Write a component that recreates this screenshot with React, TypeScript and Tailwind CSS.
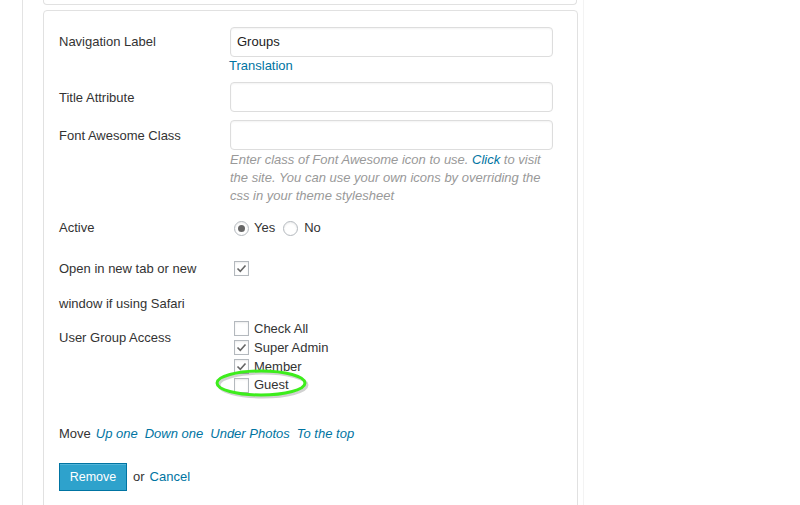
import React from "react";

const font = { fontFamily: '"Liberation Sans", Arial, sans-serif' };

const Check = ({ checked = false }: { checked?: boolean }) => (
  <span className="w-[15px] h-[15px] border border-[#b4b9be] bg-white shadow-[inset_0_1px_2px_rgba(0,0,0,0.08)] flex items-center justify-center shrink-0">
    {checked && (
      <svg width="11" height="11" viewBox="0 0 11 11">
        <path d="M1.5 5.5 L4.3 8.3 L9.5 2.5" fill="none" stroke="#666" strokeWidth="1.6" />
      </svg>
    )}
  </span>
);

const Radio = ({ checked = false }: { checked?: boolean }) => (
  <span className="w-[15px] h-[15px] rounded-full border border-[#b4b9be] bg-white shadow-[inset_0_1px_2px_rgba(0,0,0,0.08)] flex items-center justify-center shrink-0">
    {checked && <span className="w-[7px] h-[7px] rounded-full bg-[#666]" />}
  </span>
);

const Field = () => (
  <div className="h-[30px] w-[323px] border border-[#ddd] rounded-[4px] bg-white shadow-[inset_0_1px_2px_rgba(0,0,0,0.05)]" />
);

export default function App() {
  const groups = [
    { name: "Check All", checked: false, h: "h-[19px]" },
    { name: "Super Admin", checked: true, h: "h-[19px]" },
    { name: "Member", checked: true, h: "h-[19px]" },
    { name: "Guest", checked: false, h: "h-[18px]" },
  ];

  return (
    <div className="relative w-[800px] h-[505px] bg-white overflow-hidden text-[13px] text-[#333]" style={font}>
      <div className="ml-[22px] w-[562px] h-full border-l border-[#e3e3e3] border-r border-r-[#f3f3f3] pl-[20px]">
        <div className="w-[534px] h-[5px] border border-t-0 border-[#e1e1e1] rounded-b-[4px]" />

        <div className="mt-[5px] w-[535px] h-[520px] border border-[#e1e1e1] rounded-[4px] pt-[16px] pl-[15px]">
          <div className="flex">
            <div className="w-[171px] leading-[30px]">Navigation Label</div>
            <div>
              <div className="h-[30px] w-[323px] border border-[#ddd] rounded-[4px] bg-white pl-[6px] leading-[28px] text-[#222] shadow-[inset_0_1px_2px_rgba(0,0,0,0.05)]">
                Groups
              </div>
              <a className="block leading-[18px] -ml-px text-[#0074a2]">Translation</a>
            </div>
          </div>

          <div className="flex mt-[7px]">
            <div className="w-[171px] leading-[30px] pt-px">Title Attribute</div>
            <Field />
          </div>

          <div className="flex mt-[7px]">
            <div className="w-[171px] leading-[30px] pt-px">Font Awesome Class</div>
            <div className="w-[323px]">
              <Field />
              <p className="mt-px leading-[18px] italic text-[#999]">
                Enter class of Font Awesome icon to use. <a className="text-[#0074a2]">Click</a> to visit the
                site. You can use your own icons by overriding the css in your theme stylesheet
              </p>
            </div>
          </div>

          <div className="flex mt-[14px] leading-[18px]">
            <div className="w-[171px]">Active</div>
            <div className="flex items-center pl-[4px]">
              <Radio checked />
              <span className="ml-[5px] mr-[8px]">Yes</span>
              <Radio />
              <span className="ml-[6px]">No</span>
            </div>
          </div>

          <div className="flex mt-[14px]">
            <div className="w-[171px] leading-[35px] pr-[10px]">Open in new tab or new window if using Safari</div>
            <div className="pl-[4px] pt-[10px]">
              <Check checked />
            </div>
          </div>

          <div className="flex">
            <div className="w-[171px] pt-[8px] leading-[18px]">User Group Access</div>
            <div className="pl-[4px] -mt-[2px]">
              {groups.map((g) => (
                <div key={g.name} className={`flex items-center ${g.h}`}>
                  <Check checked={g.checked} />
                  <span className="ml-[5px] leading-[18px]">{g.name}</span>
                </div>
              ))}
            </div>
          </div>

          <div className="flex mt-[31px] leading-[18px]">
            <span className="mr-[5px]">Move</span>
            <div className="flex gap-[7px] italic text-[#0074a2]">
              <a>Up one</a>
              <a>Down one</a>
              <a>Under Photos</a>
              <a>To the top</a>
            </div>
          </div>

          <div className="flex items-center mt-[20px]">
            <button className="w-[68px] h-[28px] bg-[#2ea2cc] border border-[#0074a2] text-white text-[12.5px] shadow-[inset_0_1px_0_rgba(120,200,230,0.5)]">
              Remove
            </button>
            <span className="ml-[6px]">or</span>
            <a className="ml-[5px] text-[#0074a2]">Cancel</a>
          </div>
        </div>
      </div>

      <svg className="absolute left-[213px] top-[366px]" width="100" height="36" viewBox="0 0 100 36">
        <ellipse cx="50" cy="19" rx="44" ry="12" fill="none" stroke="rgba(0,0,0,0.18)" strokeWidth="3" />
        <ellipse cx="48" cy="17" rx="44" ry="12" fill="none" stroke="#3ded1c" strokeWidth="3" />
      </svg>
    </div>
  );
}
